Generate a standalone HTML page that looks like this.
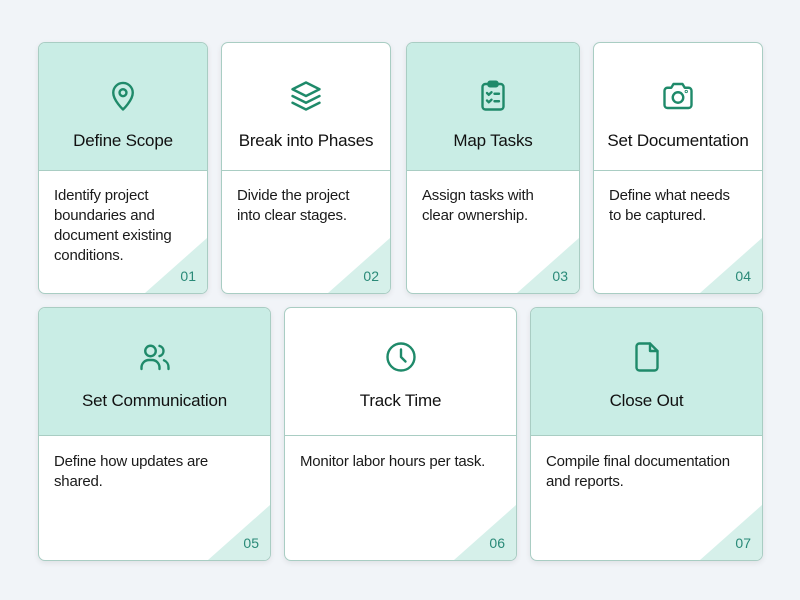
<!DOCTYPE html>
<html><head><style>
body{margin:0;width:800px;height:600px;background:#f1f4f8;font-family:"Liberation Sans",sans-serif;position:relative;overflow:hidden}
.c{position:absolute;background:#fff;border:1px solid #a9cdc3;border-radius:7px;overflow:hidden;box-shadow:0 2px 6px rgba(0,0,0,.08)}
.h{position:absolute;left:0;right:0;top:0;border-bottom:1px solid #a9cdc3;text-align:center}
.t .h{background:#c9ede5}
.h svg{position:absolute;left:50%;margin-left:-18px;width:36px;height:36px;fill:none;stroke:#1f8a6a;stroke-width:1.6;stroke-linecap:round;stroke-linejoin:round}
.ti{position:absolute;left:0;right:0;font-size:17px;color:#111;letter-spacing:-0.2px}
.b{position:absolute;left:15px;right:22px;font-size:15px;line-height:20px;color:#1a1a1a;letter-spacing:-0.2px}
.tr{position:absolute;right:0;bottom:0;width:0;height:0;border-left:62px solid transparent;border-bottom:55px solid #d6f0ea}
.n{position:absolute;right:11px;bottom:9px;font-size:14px;color:#2a8a78}
</style></head><body>

<div class="c t" style="left:38px;top:42px;width:168px;height:250px"><div class="h" style="height:127px">
<svg viewBox="0 0 24 24" style="top:35px"><path d="M12 21s-6.5-6.2-6.5-11.2a6.5 6.5 0 0 1 13 0C18.5 14.8 12 21 12 21z"/><circle cx="12" cy="9.8" r="2.3"/></svg>
<div class="ti" style="top:88px">Define Scope</div></div>
<div class="b" style="top:143px">Identify project boundaries and document existing conditions.</div><div class="tr"></div><div class="n">01</div></div>

<div class="c" style="left:221px;top:42px;width:168px;height:250px"><div class="h" style="height:127px">
<svg viewBox="0 0 24 24" style="top:35px"><path d="M12 3l9 4.5-9 4.5-9-4.5z"/><path d="M3 12l9 4.5 9-4.5"/><path d="M3 16.5l9 4.5 9-4.5"/></svg>
<div class="ti" style="top:88px">Break into Phases</div></div>
<div class="b" style="top:143px">Divide the project into clear stages.</div><div class="tr"></div><div class="n">02</div></div>

<div class="c t" style="left:406px;top:42px;width:172px;height:250px"><div class="h" style="height:127px">
<svg viewBox="0 0 24 24" style="top:35px"><rect x="5" y="4" width="14" height="17" rx="2"/><rect x="9" y="2.5" width="6" height="3" rx="1"/><path d="M8 10l1.2 1.2L11 9.5M8 15l1.2 1.2L11 14.5M13 10.5h3M13 15.5h3"/></svg>
<div class="ti" style="top:88px">Map Tasks</div></div>
<div class="b" style="top:143px">Assign tasks with clear ownership.</div><div class="tr"></div><div class="n">03</div></div>

<div class="c" style="left:593px;top:42px;width:168px;height:250px"><div class="h" style="height:127px">
<svg viewBox="0 0 24 24" style="top:35px"><path d="M3 8.5a2 2 0 0 1 2-2h2.5L9 4h6l1.5 2.5H19a2 2 0 0 1 2 2V18a2 2 0 0 1-2 2H5a2 2 0 0 1-2-2z"/><circle cx="12" cy="13" r="3.5"/><circle cx="17.5" cy="9" r=".3"/></svg>
<div class="ti" style="top:88px">Set Documentation</div></div>
<div class="b" style="top:143px">Define what needs to be captured.</div><div class="tr"></div><div class="n">04</div></div>

<div class="c t" style="left:38px;top:307px;width:231px;height:252px"><div class="h" style="height:127px">
<svg viewBox="0 0 24 24" style="top:31px"><circle cx="9" cy="8" r="3.5"/><path d="M3 20v-1a5 5 0 0 1 5-5h2a5 5 0 0 1 5 5v1"/><path d="M15 4.6a3.5 3.5 0 0 1 0 6.8M18 14.2a5 5 0 0 1 3 4.8v1"/></svg>
<div class="ti" style="top:83px">Set Communication</div></div>
<div class="b" style="top:144px">Define how updates are shared.</div><div class="tr"></div><div class="n">05</div></div>

<div class="c" style="left:284px;top:307px;width:231px;height:252px"><div class="h" style="height:127px">
<svg viewBox="0 0 24 24" style="top:31px"><circle cx="12" cy="12" r="9"/><path d="M12 7v5l3 3"/></svg>
<div class="ti" style="top:83px">Track Time</div></div>
<div class="b" style="top:144px">Monitor labor hours per task.</div><div class="tr"></div><div class="n">06</div></div>

<div class="c t" style="left:530px;top:307px;width:231px;height:252px"><div class="h" style="height:127px">
<svg viewBox="0 0 24 24" style="top:31px"><path d="M7 3h7l5 5v11a2 2 0 0 1-2 2H7a2 2 0 0 1-2-2V5a2 2 0 0 1 2-2z"/><path d="M14 3v5h5"/></svg>
<div class="ti" style="top:83px">Close Out</div></div>
<div class="b" style="top:144px">Compile final documentation and reports.</div><div class="tr"></div><div class="n">07</div></div>

</body></html>
